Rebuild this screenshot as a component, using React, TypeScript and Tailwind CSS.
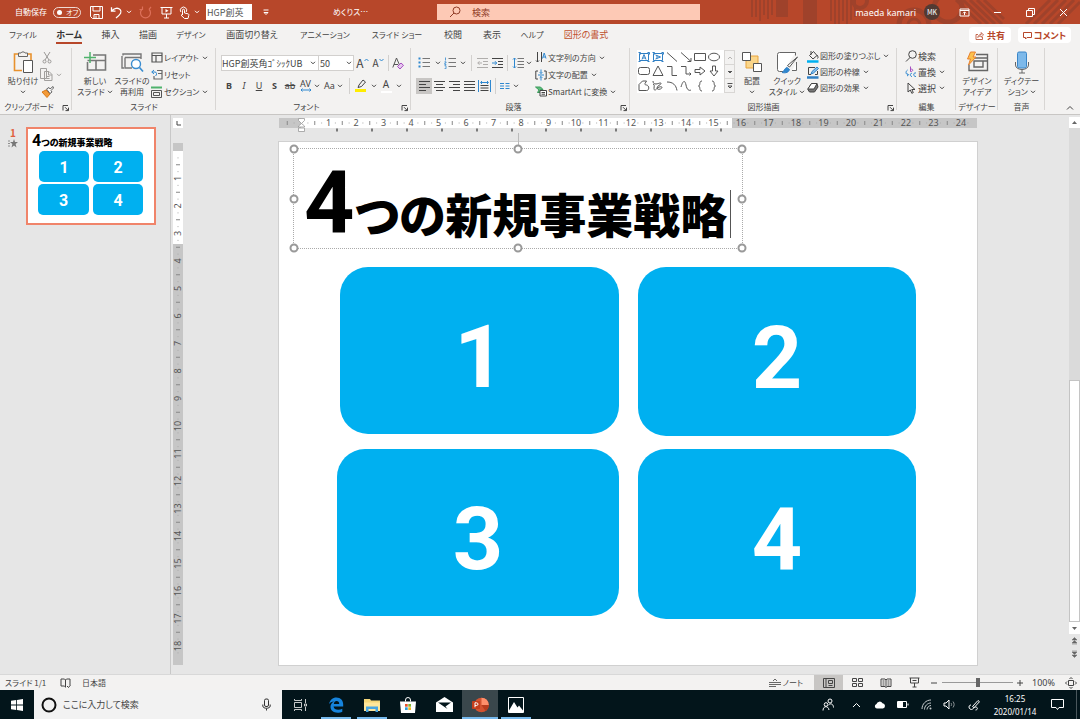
import { ReactNode } from 'react';

interface IconProps {
  w: number;
  h: number;
  children: ReactNode;
  className?: string;
}

function Icon({ w, h, children, className = '' }: IconProps) {
  return (
    <svg
      width={w}
      height={h}
      viewBox={`0 0 ${w} ${h}`}
      fill="none"
      stroke="currentColor"
      strokeWidth="1"
      aria-hidden="true"
      className={`shrink-0 ${className}`}
    >
      {children}
    </svg>
  );
}

function Chevron({ className = '' }: { className?: string }) {
  return (
    <Icon w={6} h={4} className={className}>
      <path d="M1 .8 3 2.8 5 .8" />
    </Icon>
  );
}

function Tool({ label, className = '', children }: { label: string; className?: string; children: ReactNode }) {
  return (
    <button type="button" aria-label={label} className={`flex shrink-0 items-center justify-center ${className}`}>
      {children}
    </button>
  );
}

function Separator() {
  return <span className="mx-[3px] h-4 w-px shrink-0 bg-[#d2d0ce]" />;
}

function Launcher() {
  return (
    <button type="button" aria-label="詳細設定" className="absolute right-[2px] bottom-[2px]">
      <Icon w={8} h={8}>
        <path d="M1 6.5V1.5h5M3 3.2l3.2 3.2M6.5 3.6v3h-3" />
      </Icon>
    </button>
  );
}

interface GroupProps {
  label: string;
  width: string;
  launcher?: boolean;
  children: ReactNode;
}

function Group({ label, width, launcher, children }: GroupProps) {
  return (
    <section aria-label={label} className={`relative flex shrink-0 flex-col ${width}`}>
      <div className="flex flex-1 items-start">{children}</div>
      <div className="h-[14px] text-center text-[8px] leading-[13px]">{label}</div>
      {launcher && <Launcher />}
      <span className="absolute top-[2px] right-0 bottom-[4px] w-px bg-[#d8d6d4]" />
    </section>
  );
}

interface BigButtonProps {
  icon: ReactNode;
  lines: string[];
  menu?: boolean;
  className?: string;
}

function BigButton({ icon, lines, menu, className = '' }: BigButtonProps) {
  return (
    <button type="button" className={`flex shrink-0 flex-col items-center pt-[3px] text-[8px] leading-[11px] ${className}`}>
      <span className="flex h-[26px] items-center">{icon}</span>
      {lines.map((line, i) => (
        <span key={line} className="flex items-center gap-[2px] whitespace-nowrap">
          {line}
          {menu && lines.length > 1 && i === lines.length - 1 && <Chevron />}
        </span>
      ))}
      {menu && lines.length === 1 && <Chevron className="mt-1" />}
    </button>
  );
}

interface RowButtonProps {
  icon: ReactNode;
  label: string;
  menu?: boolean;
  size?: string;
}

function RowButton({ icon, label, menu, size = 'text-[8px]' }: RowButtonProps) {
  return (
    <button type="button" className={`flex items-center whitespace-nowrap leading-none ${size}`}>
      <span className="mr-[1px] flex w-[12px] justify-center">{icon}</span>
      {label}
      {menu && <Chevron className="ml-[3px]" />}
    </button>
  );
}

/* ---------- title bar ---------- */

function TitleBar() {
  return (
    <header className="relative flex h-6 shrink-0 items-center bg-[#b7472a] text-white">
      <svg className="absolute top-0 right-0 h-6 w-[340px]" viewBox="0 0 340 24" aria-hidden="true">
        <g stroke="#9f422b" fill="none">
          <path strokeWidth="2" d="M12 0v17M16 0v17M20 0v21M24 0v15M28 0v19M32 0v15" />
          <path strokeWidth="12" d="M42 0v17" />
          <path strokeWidth="14" d="M70 0v24" />
          <path strokeWidth="2" d="M91 0v21M95 0v24M99 0v24M103 0v21M107 0v24M111 0v20M115 0v17" />
          <circle cx="120" cy="1" r="7" strokeWidth="4" />
          <circle cx="174" cy="25" r="15" strokeWidth="5" />
          <circle cx="174" cy="25" r="6" strokeWidth="3" />
          <circle cx="208" cy="8" r="14" strokeWidth="5" />
          <path strokeWidth="3" d="M216 0l25 24M223 0l25 24M230 0l25 24M237 0l25 24M244 0l20 19" />
          <path strokeWidth="3" d="M286 24l24-24M294 24l24-24M302 24l24-24M310 24l24-24M318 24l22-22" />
        </g>
      </svg>
      <div className="relative flex w-[437px] shrink-0 items-center pl-[15px]">
        <span className="w-[38px] text-[8px] whitespace-nowrap">自動保存</span>
        <button
          type="button"
          role="switch"
          aria-checked="false"
          aria-label="自動保存"
          className="flex h-[11px] w-7 items-center gap-[4px] rounded-full border border-white/80 pl-[3px] text-[7px] leading-none"
        >
          <span className="size-[5px] rounded-full bg-white" />
          オフ
        </button>
        <Tool label="上書き保存" className="ml-[8px] w-[14px]">
          <Icon w={13} h={13}>
            <path d="M.5.5h12v12H2.500L.5 10.500zM3 .5v4.500h7V.5M4 12.500V8.500h5v4M6 9.500v3" />
          </Icon>
        </Tool>
        <Tool label="元に戻す" className="ml-[7px] w-[13px]">
          <Icon w={13} h={13}>
            <path strokeWidth="1.300" d="M1.500 1.200v4h4M1.800 5C4 2 8 1.300 10.200 3.600c2 2.400.5 4.400-4.200 8.400" />
          </Icon>
        </Tool>
        <Chevron className="ml-[3px]" />
        <Tool label="繰り返し" className="ml-[7px] w-[13px] text-[#dd705a]">
          <Icon w={13} h={13}>
            <path strokeWidth="1.200" d="M3 3.300A5 5 0 1 0 10 3.300M3.500.5v3H.5M10 3.300l2-2.300" />
          </Icon>
        </Tool>
        <Tool label="最初から開始" className="ml-[8px] w-[13px]">
          <Icon w={13} h={13}>
            <path d="M.5 1.500h12M2 1.500v6.500h9V1.500M6.500 8v4M4 12h5" />
            <path d="M5.500 3v3.500l3-1.700z" fill="currentColor" stroke="none" />
          </Icon>
        </Tool>
        <Tool label="タッチ/マウス モードの切り替え" className="ml-[5px] w-[13px]">
          <Icon w={13} h={13}>
            <path d="M4.500 9V4.200a1 1 0 0 1 2 0V7l3.500.8c1 .3 1 1 .7 2L10 12.500H6.500L3 9.200l1.500-.6M2.800 6a3.200 3.200 0 1 1 5.400 0" />
          </Icon>
        </Tool>
        <Chevron className="ml-[3px]" />
        <input
          aria-label="フォント"
          defaultValue="HGP創英"
          className="ml-[6px] h-4 w-[46px] bg-white px-px text-[9px] leading-none text-[#555] outline-none"
        />
        <Tool label="クイック アクセス ツール バーのユーザー設定" className="ml-[9px] w-[10px]">
          <Icon w={8} h={7}>
            <path d="M1.500 1h5M2 3.500l2 2 2-2z" />
          </Icon>
        </Tool>
        <span className="ml-[62px] text-[8px] whitespace-nowrap">めくりス…</span>
      </div>
      <label className="relative flex h-4 min-w-0 flex-1 items-center gap-[11px] bg-[#fdc9b5] pl-3 text-[#8f3a25]">
        <Icon w={12} h={12}>
          <circle cx="7.500" cy="4.500" r="3.500" />
          <path d="M5 7 1 11" />
        </Icon>
        <input
          type="search"
          aria-label="検索"
          placeholder="検索"
          className="min-w-0 flex-1 bg-transparent text-[9px] leading-none outline-none placeholder:text-[#8f3a25]"
        />
      </label>
      <div className="relative flex w-[380px] shrink-0 items-center justify-end">
        <span className="mr-[8px] text-[9px] leading-none whitespace-nowrap [font-family:'Noto_Sans',sans-serif]">maeda kamari</span>
        <span className="mr-[8px] flex size-4 items-center justify-center rounded-full bg-[#523a33] text-[7px]">MK</span>
        <Tool label="リボンの表示オプション" className="h-6 w-[33px]">
          <Icon w={11} h={9}>
            <path d="M1 1h9v7H1zM1 2.500h9M5.500 7V4M4 5.300l1.500-1.500L7 5.300" />
          </Icon>
        </Tool>
        <Tool label="最小化" className="h-6 w-[33px]">
          <Icon w={9} h={9}>
            <path d="M1 4.500h7" />
          </Icon>
        </Tool>
        <Tool label="元に戻す (縮小)" className="h-6 w-[33px]">
          <Icon w={9} h={9}>
            <path d="M.5 2.500h6v6h-6zM2.500 2.500v-2h6v6h-2" />
          </Icon>
        </Tool>
        <Tool label="閉じる" className="h-6 w-[33px]">
          <Icon w={9} h={9}>
            <path d="M1 1l7 7M8 1 1 8" />
          </Icon>
        </Tool>
      </div>
    </header>
  );
}

/* ---------- tabs ---------- */

const tabs = [
  { label: 'ファイル', style: 'w-[46px] text-[8px]' },
  { label: 'ホーム', style: 'w-[46px] text-[9px] font-bold text-[#333]' },
  { label: '挿入', style: 'w-[37px] text-[9px]' },
  { label: '描画', style: 'w-[38px] text-[9px]' },
  { label: 'デザイン', style: 'w-[48px] text-[8px]' },
  { label: '画面切り替え', style: 'w-[74px] text-[9px]' },
  { label: 'アニメーション', style: 'w-[72px] text-[8px]' },
  { label: 'スライド ショー', style: 'w-[72px] text-[8px]' },
  { label: '校閲', style: 'w-[40px] text-[9px]' },
  { label: '表示', style: 'w-[38px] text-[9px]' },
  { label: 'ヘルプ', style: 'w-[42px] text-[8px]' },
  { label: '図形の書式', style: 'w-[66px] text-[9px] text-[#c0502f]' },
];

function Tabs() {
  return (
    <div className="flex h-[22px] shrink-0 items-center justify-between pr-[9px]">
      <nav className="flex">
        {tabs.map((tab, i) => (
          <button key={tab.label} type="button" className={`flex h-[22px] justify-center leading-[22px] whitespace-nowrap ${tab.style}`}>
            <span className={i === 1 ? 'h-5 border-b-2 border-[#b7472a]' : ''}>{tab.label}</span>
          </button>
        ))}
      </nav>
      <div className="flex gap-[7px] text-[9px] font-bold text-[#b7472a]">
        <button type="button" className="flex h-4 w-[42px] items-center justify-center gap-[3px] rounded-sm bg-white leading-none">
          <Icon w={9} h={9}>
            <path d="M3 3.500H1v5h6.500V6M2.800 6.500c.3-2 1.600-3 3.400-3V1.500L8.500 4 6.200 6.200V5C4.800 5 3.800 5.300 2.800 6.500z" strokeWidth=".8" />
          </Icon>
          共有
        </button>
        <button type="button" className="flex h-4 w-[53px] items-center justify-center gap-[2px] rounded-sm bg-white leading-none">
          <Icon w={9} h={9}>
            <path d="M.5 1.500h8v5H4L2.500 8V6.500h-2z" />
          </Icon>
          コメント
        </button>
      </div>
    </div>
  );
}

/* ---------- ribbon ---------- */

function ClipboardGroup() {
  return (
    <Group label="クリップボード" width="w-[72px] pr-[14px]" launcher>
      <BigButton
        className="w-[38px] pl-[8px]"
        menu
        lines={['貼り付け']}
        icon={
          <Icon w={22} h={24}>
            <path d="M7 4H2.500v16.500H10M16 4h3v6" stroke="#e8912d" strokeWidth="1.600" />
            <path d="M6.500 3h2.500c.3-1.500 3.700-1.500 4 0h2.500v3.500h-9z" fill="#f3f2f1" stroke="#666" />
            <path d="M11.500 10.500h9v12h-9z" fill="#fff" stroke="#555" />
          </Icon>
        }
      />
      <div className="flex flex-col pt-[3px] pl-[2px]">
        <Tool label="切り取り" className="h-[17px] w-[13px] text-[#9a9896]">
          <Icon w={10} h={13}>
            <path d="M2 1l5 8M8 1 3 9" />
            <circle cx="2.500" cy="10.500" r="1.500" />
            <circle cx="7.500" cy="10.500" r="1.500" />
          </Icon>
        </Tool>
        <Tool label="コピー" className="h-[17px] w-[22px] gap-[3px] text-[#a19f9d]">
          <Icon w={13} h={13}>
            <path d="M.5.5h6v10h-6zM4.500 3.500h4.500l3 3v6H4.500zM8.500 3.500v3.500H12M6.500 8.500h3M6.500 10.500h3" fill="#f3f2f1" />
          </Icon>
          <Chevron />
        </Tool>
        <Tool label="書式のコピー/貼り付け" className="h-[17px] w-[14px]">
          <Icon w={13} h={12}>
            <path d="M1 6l4-2 4 4-3 3.500z" fill="#f29a38" stroke="#d87817" />
            <path d="M5.500 3 8 1.500 9 3l3-2.500L12.500 2l-2.500 2.500L11 6 9 7.500z" fill="#fff" stroke="#555" strokeWidth=".9" />
          </Icon>
        </Tool>
      </div>
    </Group>
  );
}

function SlidesGroup() {
  return (
    <Group label="スライド" width="w-[144px]">
      <BigButton
        className="w-[42px] pl-[4px]"
        menu
        lines={['新しい', 'スライド']}
        icon={
          <Icon w={23} h={22}>
            <path d="M9 4h12.500v15H3.500v-8M3.500 9.500h18M12 9.500V19" stroke="#777" strokeWidth="1.600" />
            <path d="M6 1v11M0 6.500h12" stroke="#4fb36c" strokeWidth="1.500" />
          </Icon>
        }
      />
      <BigButton
        className="w-[36px]"
        lines={['スライドの', '再利用']}
        icon={
          <Icon w={23} h={22}>
            <path d="M3 17H1V5M2 4.500V3h18v5M4 6.500h16M4 6.500V17h7" stroke="#777" strokeWidth="1.400" />
            <circle cx="15" cy="13" r="4.500" fill="#fff" stroke="#3a8dd0" strokeWidth="1.400" />
            <path d="M18.500 16.500 22 20.500" stroke="#3a8dd0" strokeWidth="1.600" />
          </Icon>
        }
      />
      <div className="grid auto-rows-[17px] pt-[3px] pl-[1px]">
        <RowButton
          label="レイアウト"
          menu
          icon={
            <Icon w={12} h={11}>
              <path d="M1 1h10v9H1zM1 3.500h10M5 4v6" stroke="#555" strokeWidth="1.200" />
            </Icon>
          }
        />
        <RowButton
          label="リセット"
          icon={
            <Icon w={12} h={11}>
              <path d="M6 1.500h5v8.500H3V7M7 4.500h4" stroke="#666" strokeWidth="1.200" />
              <path d="M.8 3h3.200c2 0 2 3 .5 4M3 1 .8 3 3 5" stroke="#2f88d0" />
            </Icon>
          }
        />
        <RowButton
          label="セクション"
          menu
          icon={
            <Icon w={12} h={12}>
              <path d="M0 1.500h11" stroke="#4fb36c" strokeWidth="2" />
              <path d="M.5 4.500h10v7H.5zM2.500 6.500h6v3h-6z" stroke="#555" />
            </Icon>
          }
        />
      </div>
    </Group>
  );
}

function FontGroup() {
  return (
    <Group label="フォント" width="w-[195px] pr-[14px]" launcher>
      <div className="pt-[9px] pl-[5px]">
        <div className="flex h-4 items-center">
          <label className="flex h-4 w-[98px] items-center border border-[#d2d0ce] bg-white">
            <select aria-label="フォント" className="w-[88px] appearance-none bg-transparent text-[9px] leading-none outline-none">
              <option>HGP創英角ｺﾞｼｯｸUB</option>
            </select>
            <Chevron />
          </label>
          <label className="flex h-4 w-[35px] items-center border border-l-0 border-[#d2d0ce] bg-white pl-px">
            <select aria-label="フォント サイズ" className="w-[26px] appearance-none bg-transparent text-[9px] leading-none outline-none">
              <option>50</option>
            </select>
            <Chevron />
          </label>
          <Tool label="フォント サイズの拡大" className="w-[17px] text-[12px] leading-none">
            A
            <Icon w={5} h={10}>
              <path d="M.5 3l2-2 2 2" stroke="#2f88d0" />
            </Icon>
          </Tool>
          <Tool label="フォント サイズの縮小" className="w-[14px] text-[10px] leading-none">
            A
            <Icon w={5} h={10}>
              <path d="M.5 1l2 2 2-2" stroke="#2f88d0" />
            </Icon>
          </Tool>
          <Separator />
          <Tool label="すべての書式をクリア" className="w-[12px]">
            <Icon w={12} h={13}>
              <path d="M.8 10.500 4.500 1l3 7M2 7.500h4" stroke="#555" />
              <path d="M5.500 9.500 9 6l2.500 2.300L8 12z" fill="#e6c9ef" stroke="#a64fc0" />
            </Icon>
          </Tool>
        </div>
        <div className="mt-[6px] flex h-[17px] items-center text-[9px] leading-none [font-family:'Noto_Sans',sans-serif]">
          <Tool label="太字" className="w-4 font-bold">B</Tool>
          <Tool label="斜体" className="w-[14px] italic">I</Tool>
          <Tool label="下線" className="w-4 underline">U</Tool>
          <Tool label="影" className="w-[15px] font-bold">S</Tool>
          <Tool label="取り消し線" className="w-4 line-through">ab</Tool>
          <Tool label="文字の間隔" className="w-[23px] gap-[2px]">
            <span className="flex flex-col items-center">
              AV
              <Icon w={12} h={4}>
                <path d="M1 2h10M2.500.5 1 2l1.500 1.500M9.500.5 11 2 9.500 3.500" stroke="#2f88d0" />
              </Icon>
            </span>
            <Chevron />
          </Tool>
          <Tool label="文字種の変換" className="w-[25px] gap-[2px]">
            Aa
            <Chevron />
          </Tool>
          <Separator />
          <Tool label="蛍光ペンの色" className="w-[25px] gap-[3px]">
            <Icon w={13} h={13}>
              <path d="M0 11.500h11" stroke="#ffed00" strokeWidth="3" />
              <path d="M3 8.500 4 6l4-5 2.500 2-4 4.500z" />
            </Icon>
            <Chevron />
          </Tool>
          <Tool label="フォントの色" className="w-[26px] gap-[4px]">
            <span className="flex h-[14px] w-[11px] justify-center border-b-2 border-white text-[10px] leading-[11px]">A</span>
            <Chevron />
          </Tool>
        </div>
      </div>
    </Group>
  );
}

function ListIcon({ numbered }: { numbered?: boolean }) {
  return (
    <Icon w={13} h={12}>
      <path d="M4.500 1.500H12M4.500 5.500H12M4.500 9.500H12" stroke="#777" />
      {numbered ? (
        <path d="M1.500.5v3M.5 4.800h1.500v1.200H.8v1.500h1.500M.5 8.700H2v3H.5" stroke="#2f88d0" strokeWidth=".8" />
      ) : (
        <path d="M.5 1.500h2M.5 5.500h2M.5 9.500h2" stroke="#2f88d0" strokeWidth="2" />
      )}
    </Icon>
  );
}

function ParagraphGroup() {
  return (
    <Group label="段落" width="w-[219px] pr-[14px]" launcher>
      <div className="w-[124px] shrink-0 pt-[9px] pl-[5px]">
        <div className="flex h-4 items-center">
          <Tool label="箇条書き" className="w-[26px] gap-[4px]">
            <ListIcon />
            <Chevron />
          </Tool>
          <Tool label="段落番号" className="w-[26px] gap-[3px]">
            <ListIcon numbered />
            <Chevron />
          </Tool>
          <Separator />
          <Tool label="インデントを減らす" className="w-[15px] text-[#b0aeac]">
            <Icon w={11} h={10}>
              <path d="M0 .5h11M6 3.500h5M6 6.500h5M0 9.500h11M5 5H.8M2.500 3.200.8 5l1.700 1.800" />
            </Icon>
          </Tool>
          <Tool label="インデントを増やす" className="w-[14px]">
            <Icon w={11} h={10}>
              <path d="M0 .5h11M6 3.500h5M6 6.500h5M0 9.500h11" />
              <path d="M0 5h4.500M3 3.200 4.700 5 3 6.800" stroke="#2f88d0" />
            </Icon>
          </Tool>
          <Separator />
          <Tool label="行間" className="w-[21px] gap-[2px]">
            <Icon w={12} h={12}>
              <path d="M5.500 1.500H12M5.500 4.500H12M5.500 7.500H12M5.500 10.500H12" stroke="#777" />
              <path d="M2.500 1v10M1 2.500 2.500 1 4 2.500M1 9.500 2.500 11 4 9.500" stroke="#2f88d0" />
            </Icon>
            <Chevron />
          </Tool>
        </div>
        <div className="mt-[6px] flex h-[17px] items-center">
          <Tool label="左揃え" className="h-4 w-[16px] bg-[#c8c6c4]">
            <Icon w={11} h={10}>
              <path d="M0 .5h11M0 3.500h7M0 6.500h11M0 9.500h7" />
            </Icon>
          </Tool>
          <Tool label="中央揃え" className="w-[15px]">
            <Icon w={11} h={10}>
              <path d="M0 .5h11M2 3.500h7M0 6.500h11M2 9.500h7" />
            </Icon>
          </Tool>
          <Tool label="右揃え" className="w-[15px]">
            <Icon w={11} h={10}>
              <path d="M0 .5h11M4 3.500h7M0 6.500h11M4 9.500h7" />
            </Icon>
          </Tool>
          <Tool label="両端揃え" className="w-[15px]">
            <Icon w={11} h={10}>
              <path d="M0 .5h11M0 3.500h11M0 6.500h11M0 9.500h11" />
            </Icon>
          </Tool>
          <Tool label="均等割り付け" className="w-[15px]">
            <Icon w={13} h={12}>
              <path d="M.5 0v12M12.500 0v12M3 2.500h7M4 1 2.500 2.500 4 4M9 1l1.500 1.500L9 4" stroke="#2f88d0" />
              <path d="M2.500 5.500h8M2.500 8h8M2.500 10.500h8" />
            </Icon>
          </Tool>
          <Separator />
          <Tool label="段の追加または削除" className="w-[21px] gap-[3px]">
            <Icon w={10} h={8}>
              <path d="M0 1.500h4M0 4h4M0 6.500h4M5.500 1.500h4M5.500 4h4M5.500 6.500h4" stroke="#2f88d0" />
            </Icon>
            <Chevron />
          </Tool>
        </div>
      </div>
      <div className="grid auto-rows-[17px] pt-[3px]">
        <RowButton
          label="文字列の方向"
          menu
          icon={
            <Icon w={12} h={13}>
              <path d="M2.500 1v10M1 9.500 2.500 11 4 9.500M6.500 1v10" />
              <path d="M7.500 7.500 9.200 2l1.800 5.500M8 6h2.500" stroke="#2f88d0" />
            </Icon>
          }
        />
        <RowButton
          label="文字の配置"
          menu
          icon={
            <Icon w={12} h={12}>
              <path d="M3 2H.8v8H3M9 2h2.200v8H9" />
              <path d="M3 6h6M6 .5v4M4.700 3.200 6 4.500l1.300-1.300M6 11.500v-4M4.700 8.800 6 7.500l1.300 1.300" stroke="#2f88d0" />
            </Icon>
          }
        />
        <RowButton
          label="SmartArt に変換"
          menu
          icon={
            <Icon w={12} h={11}>
              <path d="M.5 1h5l2.500 2.500H5.500v3h-3L4 4z" fill="#5cbf7b" stroke="#3c9a5c" />
              <path d="M5 4.500h6.500v5.500H5zM6.500 6.500h3.500M6.500 8.200h3.500" fill="#fff" />
            </Icon>
          }
        />
      </div>
    </Group>
  );
}

const shapes: { name: string; d: string; accent?: boolean }[] = [
  { name: 'テキスト ボックス', d: 'M1.500 2.500h9v7h-9zM4 8.500 6 3.500l2 5M4.700 7h2.600M.5 1.500h2v2M9.500 1.500h2v2M.5 10.500h2M9.500 10.500h2', accent: true },
  { name: '縦書きテキスト ボックス', d: 'M1.500 2.500h9v7h-9zM3.500 4l5 2-5 2M5 4.600v2.800M.5 1.500h2v2M9.500 1.500h2v2M.5 10.500h2M9.500 10.500h2', accent: true },
  { name: '線', d: 'M1 1.500l10 9' },
  { name: '線矢印', d: 'M1 1.500l10 9M11 7v3.500H7.500' },
  { name: '正方形/長方形', d: 'M.5 2.500h11v7H.5z' },
  { name: '楕円', d: 'M.5 6a5.500 3.800 0 1 0 11 0a5.500 3.800 0 1 0-11 0' },
  { name: '四角形: 角を丸くする', d: 'M2.500 2.500h7a2 2 0 0 1 2 2v3a2 2 0 0 1-2 2h-7a2 2 0 0 1-2-2v-3a2 2 0 0 1 2-2z' },
  { name: '二等辺三角形', d: 'M6 1 11 10.500H1z' },
  { name: 'コネクタ: カギ線', d: 'M1 1.500h5v9h5' },
  { name: 'コネクタ: カギ線矢印', d: 'M1 1.500h5v7.500h5M9.500 7.500 11 9l-1.500 1.500' },
  { name: '矢印: 右', d: 'M1 4.500h5V2l5 4-5 4V7.500H1z' },
  { name: '矢印: 下', d: 'M4.500 1v5H2l4 5 4-5H7.500V1z' },
  { name: 'フリーフォーム: 図形', d: 'M1 10.500V4.500L4.500 1h4L7 3.500c-.5 1 .5 1.500 1.500 1.500 3 .5 3 5.500 0 5.500z' },
  { name: 'フリーフォーム: フリーハンド', d: 'M1 1c0 2 1 3 3 3S9 2 9 3.500 5 5.500 5 8s5 1 5-.5S6 7 5 8.500 2 11 2 8.500 3 5 1 4' },
  { name: '円弧', d: 'M1 2c6 0 9 3 10 8.500' },
  { name: '曲線', d: 'M1 7C3 0 5 0 6 5s3 6 5 5' },
  { name: '左中かっこ', d: 'M8 1C4.500 1 7 5.500 4.500 6 7 6.500 4.500 11 8 11' },
  { name: '右中かっこ', d: 'M4 1c3.500 0 1 4.500 3.500 5C5 6.500 7.500 11 4 11' },
];

function DrawingGroup() {
  return (
    <Group label="図形描画" width="w-[267px]" launcher>
      <div className="mt-[4px] ml-[7px] flex h-[43px] shrink-0 bg-white text-[#555]">
        <div className="grid grid-cols-6 grid-rows-3">
          {shapes.map((shape) => (
            <Tool key={shape.name} label={shape.name} className={`w-[14px] ${shape.accent ? 'text-[#2f7fc4]' : ''}`}>
              <Icon w={12} h={12}>
                <path d={shape.d} />
              </Icon>
            </Tool>
          ))}
        </div>
        <div className="ml-[3px] flex w-[11px] flex-col border border-[#d8d6d4] bg-[#f3f2f1]">
          <Tool label="上へ" className="flex-1 text-[#b5b3b1]">
            <Icon w={6} h={4}>
              <path d="M1 3l2-2 2 2" />
            </Icon>
          </Tool>
          <Tool label="下へ" className="flex-1 border-y border-[#d8d6d4]">
            <Icon w={6} h={4}>
              <path d="M1 1l2 2 2-2" fill="currentColor" />
            </Icon>
          </Tool>
          <Tool label="その他" className="flex-1">
            <Icon w={6} h={6}>
              <path d="M.5 .5h5M1 3l2 2 2-2z" />
            </Icon>
          </Tool>
        </div>
      </div>
      <BigButton
        className="w-[34px]"
        menu
        lines={['配置']}
        icon={
          <Icon w={22} h={22}>
            <path d="M5 5h12v12H5z" fill="#fbd68a" stroke="#e8a33d" />
            <path d="M1.500 1.500h8v8h-8zM12.500 12.500h8v8h-8z" fill="#fff" stroke="#555" />
          </Icon>
        }
      />
      <BigButton
        className="w-[36px]"
        menu
        lines={['クイック', 'スタイル']}
        icon={
          <Icon w={23} h={23}>
            <path d="M19.500 1.500h-16a2 2 0 0 0-2 2v15a2 2 0 0 0 2 2H7M19.500 1.500v3M20.500 11v8.500H16" stroke="#666" fill="#fff" />
            <path d="M21.500 6 13.500 16l-2-1.500z" fill="#fff" stroke="#555" />
            <path d="M6 21.500c2-.5 2.500-4.500 5-5l2.500 2c-.5 2.500-3.500 4-7.500 3z" fill="#2f88d0" stroke="#2f7fc4" />
          </Icon>
        }
      />
      <div className="grid auto-rows-[16px] pt-[2px] pl-[2px]">
        <RowButton
          label="図形の塗りつぶし"
          menu
          icon={
            <Icon w={12} h={13}>
              <path d="M0 11.500h11.500" stroke="#00b0f0" strokeWidth="2.500" />
              <path d="M2.500 5.500 6.500 1.500l3.500 4L6 9zM4 1v4M10 5c1 1.500 1.500 2.500.5 3.500" />
            </Icon>
          }
        />
        <RowButton
          label="図形の枠線"
          menu
          icon={
            <Icon w={12} h={13}>
              <path d="M0 11.500h11.500" stroke="#2f7fc4" strokeWidth="2.500" />
              <path d="M8 1.500H1.500v7H4M10.500 5v3.500H8" />
              <path d="M4 8l1-2.500L10 1l1.500 1.500L6.500 7z" fill="#8cc3ee" stroke="#2f7fc4" />
            </Icon>
          }
        />
        <RowButton
          label="図形の効果"
          menu
          icon={
            <Icon w={12} h={12}>
              <path d="M.8 7.500 4.500 1.500H10L11 5 7.500 10H2.500z" fill="#777" />
              <path d="M.8 7 4.500 1.500H10L7 7z" fill="#fff" />
            </Icon>
          }
        />
      </div>
    </Group>
  );
}

function EditingGroup() {
  return (
    <Group label="編集" width="w-[59px]">
      <div className="grid auto-rows-[16px] pt-[2px] pl-[8px]">
        <RowButton
          size="text-[9px]"
          label="検索"
          icon={
            <Icon w={12} h={12}>
              <circle cx="7.500" cy="4.500" r="3.800" />
              <path d="M5 7.500 1 11.500" />
            </Icon>
          }
        />
        <RowButton
          size="text-[9px]"
          label="置換"
          menu
          icon={
            <Icon w={12} h={12}>
              <path d="M5.500.5v5M5.500 3.500c3-1.500 3 2.500 0 2" stroke="#a64fc0" />
              <path d="M2.500 4C.5 5.500.5 8 3 9M2 10l1.500-1L2.500 7.500M11 7c-3-1-3 4 0 3.500M7 7.500c-2-1-2.500 3 0 3" stroke="#2f88d0" />
            </Icon>
          }
        />
        <RowButton
          size="text-[9px]"
          label="選択"
          menu
          icon={
            <Icon w={10} h={12}>
              <path d="M2 1v9l2.300-2 1.500 3.300 1.500-.7L5.800 7.500H9z" />
            </Icon>
          }
        />
      </div>
    </Group>
  );
}

function Ribbon() {
  return (
    <div className="flex h-[69px] shrink-0 border-b border-[#c8c6c4]">
      <ClipboardGroup />
      <SlidesGroup />
      <FontGroup />
      <ParagraphGroup />
      <DrawingGroup />
      <EditingGroup />
      <Group label="デザイナー" width="w-[42px]">
        <BigButton
          className="w-full"
          lines={['デザイン', 'アイデア']}
          icon={
            <Icon w={23} h={22}>
              <path d="M10 3.500h11.500v16H3v-6M8 7h13.500M8 10h9v6H8zM17 10h4" stroke="#666" strokeWidth="1.400" />
              <path d="M4.500 1h5L7 6h3L2.500 14 4.500 8H1.500z" fill="#fbc04d" stroke="#e8802d" />
            </Icon>
          }
        />
      </Group>
      <Group label="音声" width="w-[47px]">
        <BigButton
          className="w-full"
          menu
          lines={['ディクテー', 'ション']}
          icon={
            <Icon w={16} h={23}>
              <rect x="3.500" y="1" width="9" height="16" rx="1.500" fill="#7db9ea" stroke="#3a86c8" />
              <path d="M1.500 11v3c0 6 13 6 13 0v-3M8 18.500V22M5 22h6" stroke="#666" />
            </Icon>
          }
        />
      </Group>
      <div className="flex flex-1 items-end justify-end pr-[6px] pb-[3px]">
        <Tool label="リボンを折りたたむ">
          <Icon w={8} h={6}>
            <path d="M1 4.500l3-3 3 3" />
          </Icon>
        </Tool>
      </div>
    </div>
  );
}

/* ---------- workspace ---------- */

const UNIT = 27.5;

function HorizontalRuler() {
  const ticks = Array.from({ length: 50 }, (_, i) => i - 1);
  return (
    <svg width="698" height="14" viewBox="0 0 698 14" className="shrink-0 overflow-visible" aria-hidden="true">
      <rect width="698" height="10" y="0" fill="#c6c6c6" />
      <rect x="22" width="431" height="10" fill="#fff" />
      <g stroke="#888">
        {ticks.map((i) => {
          const x = 22 + (i * UNIT) / 2;
          return (
            <g key={i}>
              {i % 2 !== 0 && <path d={`M${x} 3v4`} />}
              <path d={`M${x + UNIT / 4} 4.500v1`} stroke="#aaa" />
            </g>
          );
        })}
      </g>
      <g fill="#555" fontSize="9" textAnchor="middle" className="[font-family:'Noto_Sans',sans-serif]">
        {Array.from({ length: 24 }, (_, i) => (
          <text key={i} x={22 + (i + 1) * UNIT} y="8">
            {i + 1}
          </text>
        ))}
      </g>
      <path
        d={Array.from({ length: 12 }, (_, i) => `M${58 + Math.round(i * 34.9)} 10.500v3`).join('')}
        stroke="#555"
        strokeWidth="1.500"
      />
      <path d="M19.500.5h6v2l-3 3-3-3zM19.500 9V8l3-2.500 3 2.500v1zM19.500 10h6v3.500h-6z" fill="#fff" stroke="#999" strokeWidth=".8" />
    </svg>
  );
}

function VerticalRuler() {
  const ticks = Array.from({ length: 37 }, (_, i) => i);
  return (
    <svg width="10" height="522" viewBox="0 0 10 522" className="mt-[15px] shrink-0 overflow-visible" aria-hidden="true">
      <rect width="10" height="522" fill="#c6c6c6" />
      <rect y="8" width="10" height="93" fill="#fff" />
      <g stroke="#888">
        {ticks.map((i) => {
          const y = 8 + (i * UNIT) / 2;
          return (
            <g key={i}>
              {i % 2 !== 0 && <path d={`M3 ${y}h4`} />}
              <path d={`M4.500 ${y + UNIT / 4}h1`} stroke="#aaa" />
            </g>
          );
        })}
      </g>
      <g fill="#555" fontSize="9" textAnchor="middle" className="[font-family:'Noto_Sans',sans-serif]">
        {Array.from({ length: 18 }, (_, i) => (
          <text key={i} transform={`translate(8 ${8 + (i + 1) * UNIT}) rotate(-90)`}>
            {i + 1}
          </text>
        ))}
      </g>
    </svg>
  );
}

function Thumbnails() {
  const card =
    'absolute flex items-center justify-center rounded-[5px] bg-[#00b0f0] pt-[2px] text-[16px] leading-none font-bold text-white [font-family:Roboto,sans-serif]';
  return (
    <aside className="flex w-[171px] shrink-0 items-start border-r border-[#c8c8c8] pt-[12px]">
      <div className="flex w-[26px] flex-col items-center text-[10px] leading-[12px] font-bold text-[#e0603f]">
        1
        <Icon w={10} h={9} className="text-[#777]">
          <path d="M6 0l1 3h3L7.600 5l.9 3.500L6 6.500 3.500 8.500 4.400 5 2 3h3z" fill="currentColor" stroke="none" />
          <path d="M0 2h2M0 4.500h2M0 7h2" strokeWidth=".8" />
        </Icon>
      </div>
      <button type="button" aria-label="スライド 1" className="relative h-[98px] w-[130px] border-2 border-[#f0846a] bg-white text-black">
        <span className="absolute top-[4px] left-[4px] flex items-baseline whitespace-nowrap leading-none font-black">
          <span className="text-[16px] font-bold [font-family:Roboto,sans-serif]">4</span>
          <span className="text-[9px]">つの新規事業戦略</span>
        </span>
        <span className={`${card} top-[22px] left-[11px] h-[31px] w-[50px]`}>1</span>
        <span className={`${card} top-[22px] left-[65px] h-[31px] w-[50px]`}>2</span>
        <span className={`${card} top-[55px] left-[10px] h-[31px] w-[51px]`}>3</span>
        <span className={`${card} top-[55px] left-[65px] h-[31px] w-[50px]`}>4</span>
      </button>
    </aside>
  );
}

const cards = [
  { n: 1, box: 'left-[61px] top-[125px] h-[167px] w-[279px]' },
  { n: 2, box: 'left-[359px] top-[125px] h-[169px] w-[278px]' },
  { n: 3, box: 'left-[58px] top-[307px] h-[167px] w-[282px]' },
  { n: 4, box: 'left-[359px] top-[307px] h-[170px] w-[278px]' },
];

const handles = [
  'left-0 top-0',
  'left-1/2 top-0',
  'left-full top-0',
  'left-0 top-1/2',
  'left-full top-1/2',
  'left-0 top-full',
  'left-1/2 top-full',
  'left-full top-full',
];

function Slide() {
  return (
    <div className="relative mt-[10px] aspect-[698/523] w-[698px] shrink-0 bg-white text-black outline outline-[#d0d0d0]">
      <div className="absolute top-[6px] left-[14px] h-[101px] w-[450px] border border-dotted border-[#aaa] pt-[10px] pl-[10px]">
        <span className="absolute -top-[16px] left-1/2 h-4 w-px bg-[#bbb]" />
        <h1 className="flex items-baseline whitespace-nowrap leading-none font-black">
          <span className="text-[88px] font-bold [font-family:Roboto,sans-serif]">4</span>
          <span className="text-[47px]">つの新規事業戦略</span>
        </h1>
        <span className="absolute top-[41px] right-[11px] h-12 w-px bg-[#555]" />
        {handles.map((pos) => (
          <span key={pos} className={`absolute size-[9px] -translate-1/2 rounded-full border-2 border-[#999] bg-white ${pos}`} />
        ))}
      </div>
      {cards.map((card) => (
        <div
          key={card.n}
          className={`absolute flex items-center justify-center rounded-[28px] bg-[#00b0f0] pt-[12px] text-[88px] leading-none font-bold text-white [font-family:Roboto,sans-serif] ${card.box}`}
        >
          {card.n}
        </div>
      ))}
    </div>
  );
}

function ScrollColumn() {
  return (
    <div className="flex w-3 shrink-0 flex-col items-center pt-[2px] text-[#666]">
      <Tool label="上へスクロール" className="h-[11px] w-[11px] bg-white">
        <Icon w={7} h={5}>
          <path d="M1 4l2.500-3L6 4z" fill="currentColor" stroke="none" />
        </Icon>
      </Tool>
      <div className="flex w-[11px] flex-1 flex-col justify-end bg-[#dadada]">
        <div className="h-[49%] border border-[#c4c4c4] bg-white" />
      </div>
      <Tool label="下へスクロール" className="h-[12px] w-[11px] bg-white">
        <Icon w={7} h={5}>
          <path d="M1 1l2.500 3L6 1z" fill="currentColor" stroke="none" />
        </Icon>
      </Tool>
      <Tool label="前のスライド" className="h-[13px] w-3">
        <Icon w={7} h={8}>
          <path d="M1 3l2.500-2.500L6 3zM1 6l2.500-2.500L6 6zM1 7h5" fill="currentColor" strokeWidth=".5" />
        </Icon>
      </Tool>
      <Tool label="次のスライド" className="mb-[14px] h-[13px] w-3">
        <Icon w={7} h={8}>
          <path d="M1 5l2.500 2.500L6 5zM1 2l2.500 2.500L6 2zM1 1h5" fill="currentColor" strokeWidth=".5" />
        </Icon>
      </Tool>
    </div>
  );
}

function Workspace() {
  return (
    <main className="flex flex-1 bg-[#e6e6e6]">
      <Thumbnails />
      <div className="flex shrink-0 flex-col pt-[3px] pl-[2px]">
        <Tool label="タブの種類" className="h-[10px] w-[10px] bg-white">
          <Icon w={5} h={5}>
            <path d="M1 0v4h4" />
          </Icon>
        </Tool>
        <VerticalRuler />
      </div>
      <div className="flex min-w-0 flex-1 flex-col items-center pt-[3px] pl-[5px]">
        <HorizontalRuler />
        <Slide />
      </div>
      <ScrollColumn />
    </main>
  );
}

/* ---------- status bar ---------- */

function StatusBar() {
  return (
    <footer className="flex h-4 shrink-0 items-center border-t border-[#d8d8d8] text-[8px] leading-none whitespace-nowrap">
      <span className="w-[53px] pl-[5px]">スライド 1/1</span>
      <Tool label="スペルチェック" className="w-[25px]">
        <Icon w={11} h={10}>
          <path d="M5.500 2v7.500M1 1h3.500l1 1 1-1H10v6M1 1v7h3.500l1 1M7 8l1.500 1.500 2-2.500" />
        </Icon>
      </Tool>
      <span className="pl-[4px]">日本語</span>
      <button type="button" className="mr-[11px] ml-auto flex items-center gap-[2px]">
        <Icon w={12} h={10}>
          <path d="M0 4.500h12M0 6.500h12M0 8.500h7M4 3l2-2 2 2" strokeWidth=".8" />
        </Icon>
        ノート
      </button>
      <Tool label="標準" className="h-[15px] w-[29px] bg-[#c8c6c4]">
        <Icon w={12} h={10}>
          <path d="M.5.5h11v9H.5zM3 .5v9M5.500 2.500h4v3h-4zM5.500 7.500h4" />
        </Icon>
      </Tool>
      <Tool label="スライド一覧" className="w-[29px]">
        <Icon w={11} h={10}>
          <path d="M.5.5h4v3h-4zM6.500.5h4v3h-4zM.5 5.500h4v3h-4zM6.500 5.500h4v3h-4z" />
        </Icon>
      </Tool>
      <Tool label="閲覧表示" className="w-[28px]">
        <Icon w={12} h={10}>
          <path d="M6 2v7.500M1 1h4l1 1 1-1h4v7.500H7l-1 1-1-1H1zM2.500 3h2M2.500 5h2M7.500 3h2M7.500 5h2M2.500 7h2M7.500 7h2" />
        </Icon>
      </Tool>
      <Tool label="スライド ショー" className="w-[29px]">
        <Icon w={11} h={11}>
          <path d="M.5 1h10M1.500 1v5h8V1M5.500 6v4M3.500 10h4M3.500 3.500h4" />
        </Icon>
      </Tool>
      <Tool label="縮小" className="mr-[3px] w-[10px]">
        <Icon w={6} h={6}>
          <path d="M0 3h6" />
        </Icon>
      </Tool>
      <input
        type="range"
        aria-label="ズーム"
        className="h-[9px] w-[71px] appearance-none bg-[linear-gradient(#999,#999)] bg-[length:100%_1px] bg-center bg-no-repeat [&::-webkit-slider-thumb]:h-[9px] [&::-webkit-slider-thumb]:w-[4px] [&::-webkit-slider-thumb]:appearance-none [&::-webkit-slider-thumb]:bg-[#666]"
      />
      <Tool label="拡大" className="ml-[3px] w-[8px]">
        <Icon w={6} h={6}>
          <path d="M0 3h6M3 0v6" />
        </Icon>
      </Tool>
      <span className="ml-[8px] w-[33px] text-[9px] [font-family:'Noto_Sans',sans-serif]">100%</span>
      <Tool label="現在のウィンドウの大きさに合わせる" className="mr-[3px] w-[12px]">
        <Icon w={12} h={12}>
          <path d="M3.500 3.500h5v5h-5zM4.500 2 6 .5 7.500 2M4.500 10 6 11.500 7.500 10M2 4.500.5 6 2 7.500M10 4.500 11.500 6 10 7.500" />
        </Icon>
      </Tool>
    </footer>
  );
}

/* ---------- taskbar ---------- */

function TaskButton({ label, open, active, children }: { label: string; open?: boolean; active?: boolean; children: ReactNode }) {
  return (
    <button
      type="button"
      aria-label={label}
      className={`relative flex h-full w-9 shrink-0 items-center justify-center ${active ? 'bg-[#3a474c]' : ''}`}
    >
      {children}
      {open && <span className={`absolute bottom-0 h-[2px] bg-[#76b9ed] ${active ? 'inset-x-0' : 'inset-x-[3px]'}`} />}
    </button>
  );
}

function Taskbar() {
  return (
    <div className="flex h-[29px] shrink-0 items-center bg-[#03151b] text-white">
      <Tool label="スタート" className="h-full w-[34px]">
        <Icon w={12} h={12}>
          <path
            d="M0 1.700 5.200 1v4.600H0zM6 .9 12 0v5.600H6zM0 6.400h5.200V11L0 10.300zM6 6.400h6V12l-6-.9z"
            fill="currentColor"
            stroke="none"
          />
        </Icon>
      </Tool>
      <label className="flex h-full w-[248px] items-center bg-[#f2f2f2] pl-[7px] text-[#333]">
        <Icon w={16} h={16}>
          <circle cx="8" cy="8" r="6.500" stroke="#111" strokeWidth="2" />
        </Icon>
        <input
          aria-label="ここに入力して検索"
          placeholder="ここに入力して検索"
          className="ml-[6px] min-w-0 flex-1 bg-transparent text-[9px] outline-none placeholder:text-[#444]"
        />
        <Icon w={9} h={13} className="mr-[11px]">
          <rect x="2.500" y="1" width="4" height="7.500" rx="1.500" />
          <path d="M.8 6.500v1.500c0 3 7.400 3 7.400 0V6.500M4.500 10.500V12.500" />
        </Icon>
      </label>
      <TaskButton label="タスク ビュー">
        <Icon w={13} h={12}>
          <path d="M.5 3.500h7v5h-7zM.5 0v1.500h7V0M.5 12v-1.500h7V12M11.500 0v4M11.500 8v4M10.500 5h2v2h-2z" stroke="#ddd" strokeWidth=".9" />
        </Icon>
      </TaskButton>
      <TaskButton label="Microsoft Edge" open>
        <Icon w={16} h={16}>
          <path
            d="M1 7.200C1.800 3 4.700.5 8.400.5c4.300 0 6.800 3 6.800 7v2H5.600c.2 2.300 2.200 3.300 4.600 3.300 1.500 0 2.900-.4 4.100-1.100v3c-1.300.7-3 1-4.700 1C5.300 15.700 2.500 13.300 2.500 9.800c0-2.300 1.300-4.200 3.500-5.300C3.700 4.600 2.100 5.500 1 7.200zm4.800-.3h5.400c0-1.800-1-2.800-2.600-2.800S6 5.200 5.800 6.900z"
            fill="#1683dc"
            stroke="none"
          />
        </Icon>
      </TaskButton>
      <TaskButton label="エクスプローラー" open>
        <Icon w={16} h={14}>
          <path d="M0 1h6l1 1.500h9V13H0z" fill="#f5d679" stroke="none" />
          <path d="M0 4.500h16V13H0z" fill="#ffe69a" stroke="none" />
          <path d="M2 8.500h12V14h-2.500v-3h-7v3H2z" fill="#49a5e0" stroke="none" />
        </Icon>
      </TaskButton>
      <TaskButton label="Microsoft Store">
        <Icon w={16} h={16}>
          <path d="M5.500 4.500V3a2.500 2.500 0 0 1 5 0v1.500" stroke="#fff" />
          <path d="M0 4.500h16L15 16H1z" fill="#fff" stroke="none" />
          <path d="M5 7h2.700v2.700H5z" fill="#e8532c" stroke="none" />
          <path d="M8.300 7H11v2.700H8.300z" fill="#7eb82f" stroke="none" />
          <path d="M5 10.300h2.700V13H5z" fill="#2b9fe0" stroke="none" />
          <path d="M8.300 10.300H11V13H8.300z" fill="#f5b81c" stroke="none" />
        </Icon>
      </TaskButton>
      <TaskButton label="メール">
        <Icon w={17} h={15}>
          <path d="M0 5.500 8.500 0 17 5.500V15H0z" fill="#fff" stroke="none" />
          <path d="M2 5.500h13L9.500 9.500 11.500 12z" fill="#03151b" stroke="none" />
        </Icon>
      </TaskButton>
      <TaskButton label="PowerPoint" open active>
        <Icon w={17} h={16}>
          <circle cx="9.500" cy="8" r="7.300" fill="#d35230" stroke="none" />
          <path d="M9.500.7A7.300 7.300 0 0 1 16.800 8H9.500z" fill="#ff8f6b" stroke="none" />
          <path d="M9.500 8h7.300a7.300 7.300 0 0 1-3.300 6z" fill="#b83b1d" stroke="none" />
          <rect x="0" y="4" width="8" height="8" rx=".8" fill="#c43e1c" stroke="none" />
          <path d="M3 10.300V5.800h1.500c2 0 2 2.700 0 2.700H3" stroke="#fff" />
        </Icon>
      </TaskButton>
      <TaskButton label="フォト" open>
        <Icon w={16} h={16}>
          <path d="M.5.5h15v15H.5z" stroke="#fff" />
          <path d="M1 13.500 6 5l3.500 5.500L11 8.500l4 5V15H1z" fill="#fff" stroke="none" />
        </Icon>
      </TaskButton>
      <div className="ml-auto flex h-full items-center">
        <Tool label="People" className="w-[32px]">
          <Icon w={12} h={13}>
            <circle cx="8" cy="3" r="2" />
            <circle cx="4" cy="6.500" r="1.800" />
            <path d="M1 12.500c0-5 5.500-5 6-.5M6.500 7C9 4.500 11.500 6.500 11.500 9.500" />
          </Icon>
        </Tool>
        <Tool label="隠れているインジケーターを表示します" className="w-[24px]">
          <Icon w={9} h={6}>
            <path d="M1 5l3.500-3.500L8 5" />
          </Icon>
        </Tool>
        <Tool label="OneDrive" className="w-[23px]">
          <Icon w={12} h={9}>
            <path d="M3 8.500a2.300 2.300 0 0 1-.5-4.500 3.300 3.300 0 0 1 6-.8 2.700 2.700 0 0 1 .5 5.300z" fill="#fff" stroke="none" />
          </Icon>
        </Tool>
        <Tool label="バッテリー" className="w-[24px]">
          <Icon w={12} h={9}>
            <path d="M.5 1.500h9v6h-9zM11 3.500v2" />
            <path d="M1 2h5v5H1z" fill="#fff" stroke="none" />
          </Icon>
        </Tool>
        <Tool label="ネットワーク" className="w-[23px] text-[#c5cacc]">
          <Icon w={11} h={11}>
            <path d="M1 10C1 5 5 1 10 1M3.500 10.500C3.500 7 6.500 4 10 4M6 10.500C6 8.500 8 6.500 10 6.500" />
            <circle cx="9.500" cy="9.500" r="1" fill="currentColor" stroke="none" />
          </Icon>
        </Tool>
        <Tool label="音量" className="w-[23px]">
          <Icon w={13} h={11}>
            <path d="M1 4h2l3-3v9L3 7H1z" />
            <path d="M8 4c.8 1 .8 2 0 3M10 2.500c1.500 2 1.500 4 0 6" stroke="#8a9295" />
          </Icon>
        </Tool>
        <Tool label="Windows Ink ワークスペース" className="w-[25px]">
          <Icon w={12} h={12}>
            <path d="M4.500 7.500 10 1.500l1.500 1.200L6 8.700zM3 6c-3 0-2.500 4.500.5 4.500 2 0 2-2.500 4-2.500 2.500 0 2.500 3 0 3" />
          </Icon>
        </Tool>
        <time dateTime="2020-01-14T16:25" className="w-[58px] text-center text-[8px] leading-[13px] whitespace-nowrap [font-family:'Noto_Sans',sans-serif]">
          <span className="block">16:25</span>
          <span className="block">2020/01/14</span>
        </time>
        <Tool label="通知" className="w-[26px]">
          <Icon w={13} h={13}>
            <path d="M.5 1.500h12v8H8L6.500 11.500 5 9.500H.5z" />
          </Icon>
        </Tool>
        <span className="mr-[3px] ml-[6px] h-full w-px bg-[#4a575c]" />
      </div>
    </div>
  );
}

export default function App() {
  return (
    <div
      lang="ja"
      className="flex min-h-screen min-w-[1080px] flex-col overflow-hidden bg-[#f3f2f1] text-[#444] [font-family:'Noto_Sans_CJK_JP',sans-serif] [font-feature-settings:'palt']"
    >
      <TitleBar />
      <Tabs />
      <Ribbon />
      <Workspace />
      <StatusBar />
      <Taskbar />
    </div>
  );
}
